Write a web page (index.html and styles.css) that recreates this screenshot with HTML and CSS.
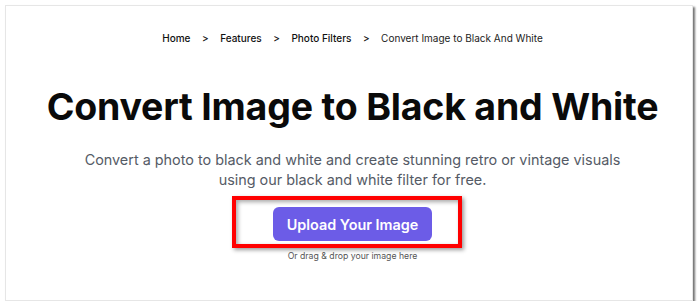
FILE: index.html
```html
<!DOCTYPE html>
<html lang="en">
<head>
<meta charset="utf-8">
<title>Convert Image to Black and White</title>
<link rel="stylesheet" href="styles.css">
</head>
<body>
<div class="frame">
  <main class="panel">
    <nav class="crumbs">
      <a class="crumb" href="#">Home</a>
      <span class="sep">&gt;</span>
      <a class="crumb" href="#">Features</a>
      <span class="sep">&gt;</span>
      <a class="crumb" href="#">Photo Filters</a>
      <span class="sep">&gt;</span>
      <span class="crumb current">Convert Image to Black And White</span>
    </nav>
    <h1 class="title">Convert Image to Black and White</h1>
    <p class="lead">Convert a photo to black and white and create stunning retro or vintage visuals<br>using our black and white filter for free.</p>
    <div class="upload">
      <button class="btn" type="button">Upload Your Image</button>
      <span class="mark"></span>
    </div>
    <p class="hint">Or drag &amp; drop your image here</p>
  </main>
</div>
</body>
</html>
```

FILE: styles.css
```css
html, body {
  margin: 0;
  padding: 0;
  background: #ffffff;
}
body {
  font-family: Inter, "Noto Sans", "Liberation Sans", sans-serif;
  color: #111111;
}
.frame {
  padding: 5px 8px 0 5px;
}
.panel {
  box-sizing: border-box;
  width: 688px;
  height: 296px;
  border: 1px solid #e6e6e6;
  box-shadow: 2px 2px 2px rgba(0, 0, 0, 0.55);
  background: #ffffff;
  display: flex;
  flex-direction: column;
  align-items: center;
  padding-top: 24px;
  padding-left: 7px;
}
.crumbs {
  display: flex;
  align-items: center;
  gap: 11.5px;
  font-size: 10px;
  line-height: 16px;
  height: 16px;
}
.crumb {
  color: #111111;
  text-decoration: none;
  font-weight: 500;
}
.crumb.current {
  font-weight: 400;
  color: #222222;
}
.sep {
  font-weight: 500;
  color: #111111;
}
.title {
  margin: 38px 0 0;
  font-size: 37.5px;
  line-height: 46px;
  font-weight: 700;
  letter-spacing: -0.2px;
  color: #0a0a0a;
}
.lead {
  margin: 20px 0 0;
  font-size: 14.4px;
  line-height: 20px;
  color: #555b66;
  text-align: center;
}
.upload {
  position: relative;
  margin-top: 17px;
}
.btn {
  display: block;
  width: 159px;
  height: 34px;
  border: 0;
  border-radius: 6px;
  background: #6c5ce7;
  color: #ffffff;
  font-family: inherit;
  font-size: 14.4px;
  font-weight: 600;
  padding: 0;
}
.mark {
  position: absolute;
  left: -41px;
  top: -11px;
  width: 230px;
  height: 52px;
  box-sizing: border-box;
  border: 4px solid #ff0000;
  box-shadow: 2px 2px 4px rgba(0, 0, 0, 0.4), inset 2px 2px 4px rgba(0, 0, 0, 0.35);
  pointer-events: none;
}
.hint {
  margin: 9px 0 0;
  font-size: 8.7px;
  line-height: 12px;
  color: #555555;
}
```
